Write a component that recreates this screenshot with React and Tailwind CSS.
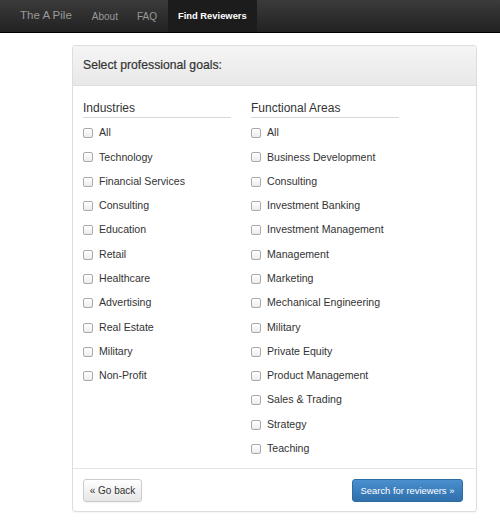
const industries = ["All", "Technology", "Financial Services", "Consulting", "Education", "Retail", "Healthcare", "Advertising", "Real Estate", "Military", "Non-Profit"];
const areas = ["All", "Business Development", "Consulting", "Investment Banking", "Investment Management", "Management", "Marketing", "Mechanical Engineering", "Military", "Private Equity", "Product Management", "Sales & Trading", "Strategy", "Teaching"];

function Check({ label }) {
  return (
    <label className="flex h-[24.3px] items-center gap-[6px] text-[10.6px] text-[#333]">
      <span className="h-[10px] w-[10px] rounded-[2px] border border-[#aaa] bg-gradient-to-b from-white to-[#ececec]" />
      {label}
    </label>
  );
}

function Column({ title, items }) {
  return (
    <div className="w-[148px]">
      <div className="mb-[3px] border-b border-[#d8d8d8] pb-[2px] text-[12px] leading-[14px] text-[#333]">{title}</div>
      {items.map((i) => <Check key={i} label={i} />)}
    </div>
  );
}

export default function App() {
  return (
    <div className="min-h-[528px] bg-white font-['Liberation_Sans',Arial,sans-serif]">
      <div className="flex h-[33px] items-stretch border-b border-black bg-gradient-to-b from-[#3b3b3b] to-[#222]">
        <div className="ml-[20px] flex items-center text-[11.5px] text-[#999]">The A Pile</div>
        <div className="ml-[20px] flex items-center text-[10px] text-[#999]">About</div>
        <div className="ml-[19px] flex items-center text-[10px] text-[#999]">FAQ</div>
        <div className="ml-[11px] flex items-center bg-[#1c1c1c] px-[10px] text-[9.4px] font-bold text-white">Find Reviewers</div>
      </div>
      <div className="ml-[72px] mt-[12px] w-[405px] rounded-[3px] border border-[#ddd] shadow-[0_1px_1px_rgba(0,0,0,0.04)]">
        <div className="flex h-[40px] items-center rounded-t-[3px] border-b border-[#ddd] bg-gradient-to-b from-[#f5f5f5] to-[#e8e8e8] px-[10px] text-[12.2px] font-medium text-[#333] [-webkit-text-stroke:0.2px_#333]">
          Select professional goals:
        </div>
        <div className="flex gap-[20px] px-[10px] pb-[7px] pt-[15px]">
          <Column title="Industries" items={industries} />
          <Column title="Functional Areas" items={areas} />
        </div>
        <div className="flex items-center justify-between border-t border-[#e5e5e5] pb-[9px] pl-[10px] pr-[13px] pt-[10px]">
          <button className="h-[23px] w-[59px] rounded-[3px] border border-[#ccc] bg-gradient-to-b from-white to-[#e6e6e6] text-[10px] text-[#333] shadow-[0_1px_1px_rgba(0,0,0,0.05)]">« Go back</button>
          <button className="h-[23px] w-[111px] rounded-[3px] border border-[#2d6ca2] bg-gradient-to-b from-[#4a8fcf] to-[#2f6fab] text-[9.4px] text-white">Search for reviewers »</button>
        </div>
      </div>
    </div>
  );
}
